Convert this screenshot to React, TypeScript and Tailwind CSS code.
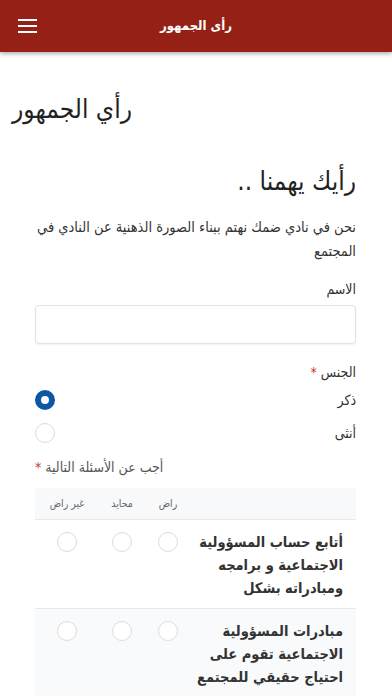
import React from "react";

function Radio({ checked = false }: { checked?: boolean }) {
  return checked ? (
    <span className="block w-[20px] h-[20px] rounded-full border-[6px] border-[#0b57a4] bg-white" />
  ) : (
    <span className="block w-[20px] h-[20px] rounded-full border border-[#dcdcdc] bg-white" />
  );
}

function Row({ lines, shaded }: { lines: string[]; shaded?: boolean }) {
  return (
    <div className={`flex border-b border-[#e6e8eb] pt-[11px] pb-[8px] ${shaded ? "bg-[#f9fafb]" : "bg-white"}`}>
      <div className="w-[165px] pr-[13px] text-[14.5px] leading-[23px] font-bold text-[#333]">
        {lines.map((l, i) => (
          <div key={i} className="whitespace-nowrap">{l}</div>
        ))}
      </div>
      <div className="w-[46px] flex justify-center pt-[1px]"><Radio /></div>
      <div className="w-[46px] flex justify-center pt-[1px]"><Radio /></div>
      <div className="w-[64px] flex justify-center pt-[1px]"><Radio /></div>
    </div>
  );
}

export default function App() {
  return (
    <div className="w-[392px] h-[696px] overflow-hidden bg-white" style={{ fontFamily: '"DejaVu Sans Condensed", "DejaVu Sans", sans-serif' }}>
      <header className="h-[52px] bg-[#952116] flex items-center relative shadow-[0_2px_4px_rgba(0,0,0,0.3)]">
        <div className="pl-[18px] flex flex-col gap-[4px]">
          <span className="block w-[19px] h-[2px] bg-white" />
          <span className="block w-[19px] h-[2px] bg-white" />
          <span className="block w-[19px] h-[2px] bg-white" />
        </div>
        <div className="absolute inset-0 flex items-center justify-center text-white text-[13px] font-bold pointer-events-none" dir="rtl">
          رأى الجمهور
        </div>
      </header>

      <div className="px-[12px] pt-[37px] text-left">
        <h1 className="text-[26px] leading-[40px] text-[#222] inline-block" dir="rtl">رأي الجمهور</h1>
      </div>

      <div className="pr-[36px] pl-[35px]" dir="rtl">
        <h2 className="mt-[32px] text-[26px] leading-[40px] text-[#222]">رأيك يهمنا ..</h2>
        <p className="mt-[14px] text-[14.5px] leading-[24px] text-[#333]">
          نحن في نادي ضمك نهتم ببناء الصورة الذهنية عن النادي في المجتمع
        </p>

        <div className="mt-[14px] text-[14px] leading-[24px] text-[#333]">الاسم</div>
        <div className="mt-[4px] h-[39px] border border-[#e2e2e2] rounded-[4px] shadow-[0_1px_2px_rgba(0,0,0,0.06)]" />

        <div className="mt-[16px] text-[14px] leading-[24px] text-[#333]">
          الجنس <span className="text-[#c0392b]">*</span>
        </div>
        <div className="mt-[4px] flex items-center justify-between h-[24px]">
          <span className="text-[14px] text-[#333]">ذكر</span>
          <Radio checked />
        </div>
        <div className="mt-[9px] flex items-center justify-between h-[24px]">
          <span className="text-[14px] text-[#333]">أنثى</span>
          <Radio />
        </div>

        <div className="mt-[10px] text-left">
          <span dir="rtl" className="inline-block text-[14px] leading-[24px] text-[#555]">
            أجب عن الأسئلة التالية <span className="text-[#c0392b]">*</span>
          </span>
        </div>

        <div className="mt-[9px]">
          <div className="flex h-[32px] items-center bg-[#f8f9fa] border-b border-[#e6e8eb] text-[10.5px] text-[#666]">
            <div className="w-[165px]" />
            <div className="w-[46px] text-center">راض</div>
            <div className="w-[46px] text-center">محايد</div>
            <div className="w-[64px] text-center">غير راض</div>
          </div>
          <Row lines={["أتابع حساب المسؤولية", "الاجتماعية و برامجه", "ومبادراته بشكل"]} />
          <Row shaded lines={["مبادرات المسؤولية", "الاجتماعية تقوم على", "احتياج حقيقي للمجتمع"]} />
        </div>
      </div>
    </div>
  );
}
